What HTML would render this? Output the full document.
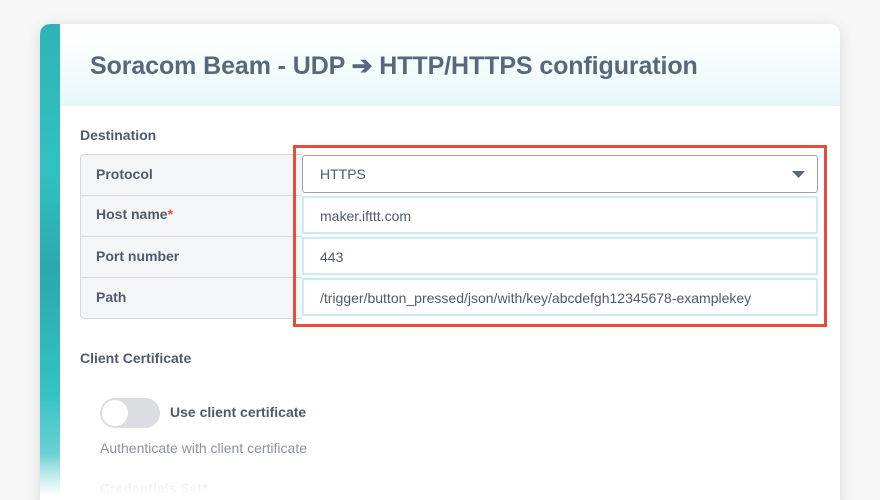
<!DOCTYPE html>
<html><head><style>
*{box-sizing:border-box;margin:0;padding:0}
html,body{width:880px;height:500px;overflow:hidden}
body{background:#f7f7f7;font-family:"Liberation Sans",sans-serif;position:relative}
.card{position:absolute;left:40px;top:24px;width:800px;height:490px;background:#fff;border-radius:10px;box-shadow:0 2px 14px rgba(0,0,0,.12);overflow:hidden}
.strip{position:absolute;left:0;top:0;width:20px;height:100%;background:linear-gradient(180deg,#2fb3b8 0%,#31c1c4 30%,#2aa9ad 50%,#33c2c5 75%,#9fe0e2 100%)}
.head{position:absolute;left:20px;top:0;right:0;height:82px;background:linear-gradient(180deg,#ffffff 0%,#f3fbfb 60%,#e6f6f7 100%)}
h1{position:absolute;left:50px;top:27px;font-size:25px;font-weight:bold;color:#58677b;letter-spacing:-.1px}
.lbl{position:absolute;font-size:14px;font-weight:bold;color:#4f5b6b}
.tbl{position:absolute;left:40px;top:130px;width:222px;height:165px;background:#f4f5f7;border:1px solid #d5d9df;border-right:none;border-radius:4px 0 0 4px}
.row{position:absolute;left:0;width:100%;border-top:1px solid #d5d9df}
.inp{position:absolute;left:262px;width:516px;height:38px;background:#fff;border:2px solid #c9ecef;font-size:14px;color:#4f5b6b;padding:10px 0 0 16px}
.red{position:absolute;left:253px;top:121px;width:534px;height:182px;border:3px solid #e84b3a}
.toggle{position:absolute;left:60px;top:374px;width:60px;height:30px;border-radius:15px;background:#dadde2}
.knob{position:absolute;left:2px;top:2px;width:26px;height:26px;border-radius:50%;background:#fff}
.fade{position:absolute;left:0;right:0;top:430px;height:60px;background:linear-gradient(180deg,rgba(255,255,255,0),#fff 70%)}
</style></head><body>
<div class="card">
<div class="strip"></div>
<div class="head"></div>
<h1>Soracom Beam - UDP ➔ HTTP/HTTPS configuration</h1>
<div class="lbl" style="left:40px;top:103px">Destination</div>
<div class="tbl">
<div class="row" style="top:40px"></div>
<div class="row" style="top:81px"></div>
<div class="row" style="top:122px"></div>
</div>
<div class="lbl" style="left:56px;top:142px">Protocol</div>
<div class="lbl" style="left:56px;top:182px">Host name<span style="color:#e84b3a">*</span></div>
<div class="lbl" style="left:56px;top:224px">Port number</div>
<div class="lbl" style="left:56px;top:265px">Path</div>
<div class="inp" style="top:131px;border:1px solid #9aa4b3;border-radius:3px;padding-left:17px">HTTPS<svg style="position:absolute;right:12px;top:15px" width="13" height="7"><path d="M0 0H13L6.5 7Z" fill="#5a6678"/></svg></div>
<div class="inp" style="top:172px">maker.ifttt.com</div>
<div class="inp" style="top:213px">443</div>
<div class="inp" style="top:254px">/trigger/button_pressed/json/with/key/abcdefgh12345678-examplekey</div>
<div class="red"></div>
<div class="lbl" style="left:40px;top:326px">Client Certificate</div>
<div class="toggle"><div class="knob"></div></div>
<div class="lbl" style="left:130px;top:380px">Use client certificate</div>
<div style="position:absolute;left:60px;top:416px;font-size:14px;color:#8a939e">Authenticate with client certificate</div>
<div class="lbl" style="left:60px;top:456px;color:#c7ccd2">Credentials Set<span style="color:#f0a8a0">*</span></div>
<div class="fade"></div>
</div>
</body></html>
